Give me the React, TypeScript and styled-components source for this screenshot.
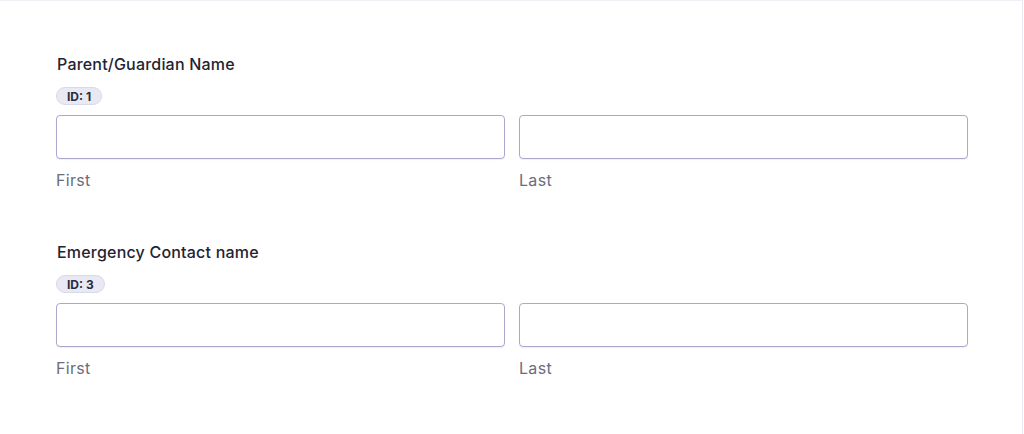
import React from "react";
import styled, { createGlobalStyle } from "styled-components";

const Global = createGlobalStyle`
  html, body { margin: 0; padding: 0; background: #ffffff; }
  body { font-family: Inter, "Noto Sans", sans-serif; -webkit-font-smoothing: antialiased; }
  * { box-sizing: border-box; }
`;

const Frame = styled.div`
  width: 1023px;
  height: 434px;
  border-top: 1px solid #efeff5;
  border-right: 1px solid #e8e8f1;
  padding: 53px 0 0 56px;
`;

const Form = styled.div`
  width: 912px;
  display: flex;
  flex-direction: column;
  gap: 52px;
`;

const Field = styled.div`
  display: flex;
  flex-direction: column;
  align-items: flex-start;
`;

const Label = styled.div`
  font-size: 16px;
  line-height: 20px;
  font-weight: 500;
  letter-spacing: 0.2px;
  color: #1e2434;
  margin-left: 1px;
`;

const Badge = styled.span`
  margin-top: 13px;
  height: 18px;
  padding: 0 10px;
  display: inline-flex;
  align-items: center;
  border-radius: 9px;
  background: #e9e9f5;
  border: 1px solid #d9d9e8;
  font-size: 12px;
  font-weight: 700;
  color: #2b2d3c;
`;

const Row = styled.div`
  margin-top: 10px;
  width: 100%;
  display: grid;
  grid-template-columns: 1fr 1fr;
  column-gap: 14px;
`;

const Part = styled.div`
  display: flex;
  flex-direction: column;
`;

const Input = styled.input`
  height: 44px;
  width: 100%;
  border: 1px solid #aaa8cc;
  border-radius: 4px;
  background: #ffffff;
  box-shadow: 0 1px 1px rgba(60, 60, 110, 0.08);
  outline: none;
  font: inherit;
  padding: 0 12px;
`;

const SubLabel = styled.div`
  margin-top: 11px;
  font-size: 16px;
  line-height: 20px;
  letter-spacing: 0.3px;
  color: #6c6c7a;
`;

const fields = [
  { label: "Parent/Guardian Name", id: 1 },
  { label: "Emergency Contact name", id: 3 },
];

export default function App() {
  return (
    <>
      <Global />
      <Frame>
        <Form>
          {fields.map((f) => (
            <Field key={f.id}>
              <Label>{f.label}</Label>
              <Badge>ID: {f.id}</Badge>
              <Row>
                <Part>
                  <Input type="text" />
                  <SubLabel>First</SubLabel>
                </Part>
                <Part>
                  <Input type="text" />
                  <SubLabel>Last</SubLabel>
                </Part>
              </Row>
            </Field>
          ))}
        </Form>
      </Frame>
    </>
  );
}
